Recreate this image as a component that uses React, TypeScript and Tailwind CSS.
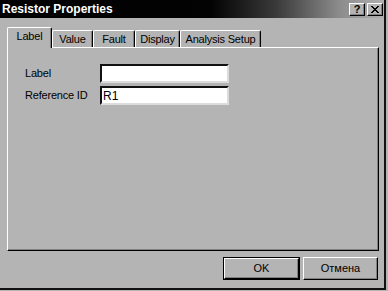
import React from "react";

function TitleBtn({ children, className = "" }: { children: React.ReactNode; className?: string }) {
  return (
    <div
      className={`mt-[3px] self-start w-[16px] h-[13px] bg-[#b4b4b4] border border-t-white border-l-white border-r-black border-b-black shadow-[inset_-1px_-1px_0_#808080] flex items-center justify-center ${className}`}
    >
      {children}
    </div>
  );
}

function Tab({ label, w, selected = false }: { label: string; w: string; selected?: boolean }) {
  return (
    <div
      className={`${w} ${
        selected ? "h-[21px] mb-[-1px] relative z-10 pb-[3px]" : "h-[17px] pt-[1px]"
      } bg-[#b4b4b4] border-t border-l border-r border-t-white border-l-white border-r-black shadow-[inset_-1px_0_0_#808080] rounded-t-[2px] flex items-center justify-center tracking-[-0.2px]`}
    >
      {label}
    </div>
  );
}

function Field({ label, value }: { label: string; value: string }) {
  return (
    <>
      <div className="tracking-[-0.2px] leading-none">{label}</div>
      <div className="w-[129px] h-[19px] bg-white border-2 border-t-[#111] border-l-[#111] border-r-[#dcdcdc] border-b-[#dcdcdc] pl-[1px] flex items-center text-[12px] leading-none">
        {value}
      </div>
    </>
  );
}

export default function App() {
  return (
    <div className="w-[388px] h-[291px] bg-[#b4b4b4] font-['Liberation_Sans',Arial,sans-serif] text-[11px] text-black overflow-hidden">
      <div className="w-[386px] h-[290px] border-r-2 border-b-2 border-r-[#111] border-b-[#111] flex flex-col">
        {/* title bar */}
        <div className="h-[18px] flex items-center pl-[2px] pr-[1px] bg-[linear-gradient(to_right,#000_0%,#030303_55%,#3a3a3a_72%,#8a8a8a_88%,#b0b0b0_100%)]">
          <span className="flex-1 text-white font-bold text-[12px] leading-none">Resistor Properties</span>
          <TitleBtn>
            <span className="font-bold text-[11px] leading-none">?</span>
          </TitleBtn>
          <TitleBtn className="ml-[2px]">
            <svg width="8" height="7" viewBox="0 0 8 7" shapeRendering="crispEdges">
              <path
                fill="#000"
                d="M0 0h2v1H0zM6 0h2v1H6zM1 1h2v1H1zM5 1h2v1H5zM2 2h4v1H2zM3 3h2v1H3zM2 4h4v1H2zM1 5h2v1H1zM5 5h2v1H5zM0 6h2v1H0zM6 6h2v1H6z"
              />
            </svg>
          </TitleBtn>
        </div>

        {/* tabs + panel */}
        <div className="pt-[9px] pl-[7px]">
          <div className="h-[20px] flex items-end">
            <Tab label="Label" w="w-[45px]" selected />
            <Tab label="Value" w="w-[41px]" />
            <Tab label="Fault" w="w-[42px]" />
            <Tab label="Display" w="w-[45px]" />
            <Tab label="Analysis Setup" w="w-[81px]" />
          </div>
          <div className="w-[372px] h-[204px] border border-t-white border-l-white border-r-black border-b-black shadow-[inset_-1px_-1px_0_#808080] pt-[16px] pl-[17px]">
            <div className="grid grid-cols-[75px_129px] items-center gap-y-[3px]">
              <Field label="Label" value="" />
              <Field label="Reference ID" value="R1" />
            </div>
          </div>
        </div>

        {/* buttons */}
        <div className="mt-[6px] flex justify-end gap-[3px] pr-[6px]">
          <div className="w-[77px] h-[23px] border border-black">
            <div className="w-full h-full border border-t-white border-l-white border-r-black border-b-black shadow-[inset_-1px_-1px_0_#808080] flex items-center justify-center">
              OK
            </div>
          </div>
          <div className="w-[75px] h-[23px] border border-t-white border-l-white border-r-black border-b-black shadow-[inset_-1px_-1px_0_#808080] flex items-center justify-center">
            Отмена
          </div>
        </div>
      </div>
    </div>
  );
}
